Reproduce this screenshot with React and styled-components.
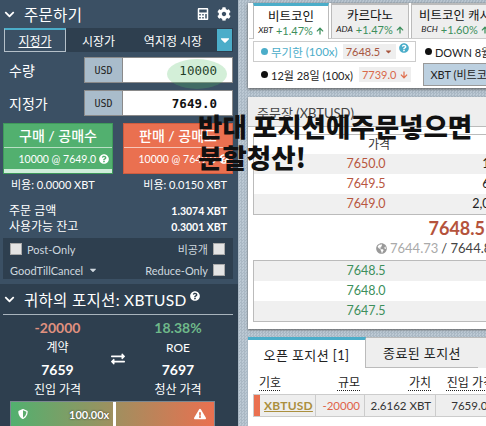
import React from 'react';
import styled, { createGlobalStyle } from 'styled-components';
import {
  FaCalculator,
  FaCog,
  FaChevronDown,
  FaQuestionCircle,
  FaArrowUp,
  FaArrowDown,
  FaCaretDown,
  FaGlobeAmericas,
  FaExchangeAlt,
  FaShieldAlt,
  FaExclamationTriangle,
} from 'react-icons/fa';

const FONT = '"Lato", "Noto Sans CJK KR", sans-serif';

const GlobalStyle = createGlobalStyle`
  html, body {
    margin: 0;
    padding: 0;
    overflow: hidden;
  }
  * {
    box-sizing: border-box;
  }
`;

const OrderForm = () => (
  <>
    <SectionHeader>
      <FaChevronDown size={11} />
      <SectionTitle>주문하기</SectionTitle>
      <HeaderIcons>
        <FaCalculator size={12} />
        <FaCog size={14} />
      </HeaderIcons>
    </SectionHeader>
    <OrderTabs>
      <OrderTab $active $width={62}>지정가</OrderTab>
      <OrderTab $width={65}>시장가</OrderTab>
      <OrderTab $width={84}>역지정 시장</OrderTab>
      <TabCaret>
        <FaCaretDown size={14} />
      </TabCaret>
    </OrderTabs>
    <FieldRow>
      <FieldLabel>수량</FieldLabel>
      <Field>
        <FieldUnit>USD</FieldUnit>
        <FieldValue $light>
          10000
          <Highlight />
        </FieldValue>
      </Field>
    </FieldRow>
    <FieldRow>
      <FieldLabel>지정가</FieldLabel>
      <Field>
        <FieldUnit>USD</FieldUnit>
        <FieldValue>7649.0</FieldValue>
      </Field>
    </FieldRow>
    <TradeButtons>
      <TradeButton $color="#52b06f" $border="#3f9a5b">
        <TradeTitle>구매 / 공매수</TradeTitle>
        <TradeDetail>
          10000 @ 7649.0 <FaQuestionCircle size={10} />
        </TradeDetail>
        <TradeFoot />
      </TradeButton>
      <TradeButton $color="#ea7050" $border="#cf5c3f">
        <TradeTitle>판매 / 공매도</TradeTitle>
        <TradeDetail>
          10000 @ 7649.0 <FaQuestionCircle size={10} />
        </TradeDetail>
      </TradeButton>
    </TradeButtons>
    <FeeRow>
      <span>비용: 0.0000 XBT</span>
      <span>비용: 0.0150 XBT</span>
    </FeeRow>
    <Summary>
      <SummaryRow>
        <span>주문 금액</span>
        <strong>1.3074 XBT</strong>
      </SummaryRow>
      <SummaryRow>
        <span>사용가능 잔고</span>
        <strong>0.3001 XBT</strong>
      </SummaryRow>
    </Summary>
    <Options>
      <OptionRow>
        <OptionItem>
          <Check />
          Post-Only
        </OptionItem>
        <OptionItem>
          비공개
          <Check />
        </OptionItem>
      </OptionRow>
      <OptionRow>
        <OptionItem>
          GoodTillCancel <FaCaretDown size={10} />
        </OptionItem>
        <OptionItem>
          Reduce-Only
          <Check />
        </OptionItem>
      </OptionRow>
    </Options>
  </>
);

const PositionSummary = () => (
  <PositionSection>
    <PositionHeader>
      <FaChevronDown size={11} />
      <SectionTitle>귀하의 포지션: XBTUSD</SectionTitle>
      <TitleHelp>
        <FaQuestionCircle size={10} />
      </TitleHelp>
    </PositionHeader>
    <Stats>
      <StatColumn>
        <StatValue $color="#e0917f">-20000</StatValue>
        <StatLabel>계약</StatLabel>
        <StatValue>7659</StatValue>
        <StatLabel>진입 가격</StatLabel>
      </StatColumn>
      <SwapIcon>
        <FaExchangeAlt size={14} />
      </SwapIcon>
      <StatColumn>
        <StatValue $color="#6fb98a">18.38%</StatValue>
        <StatLabel>ROE</StatLabel>
        <StatValue>7697</StatValue>
        <StatLabel>청산 가격</StatLabel>
      </StatColumn>
    </Stats>
    <LeverageBar>
      <FaShieldAlt size={10} />
      <LeverageText>100.00x</LeverageText>
      <LeverageMark />
      <FaExclamationTriangle size={12} />
    </LeverageBar>
  </PositionSection>
);

const InstrumentPanel = () => (
  <TopPanel>
    <CoinTabs>
      <CoinTab $active $width={76}>
        <CoinName>비트코인</CoinName>
        <CoinChange>
          <i>XBT</i> <b>+1.47%</b> <FaArrowUp size={8} />
        </CoinChange>
      </CoinTab>
      <CoinTab $width={78}>
        <CoinName>카르다노</CoinName>
        <CoinChange>
          <i>ADA</i> <b>+1.47%</b> <FaArrowUp size={8} />
        </CoinChange>
      </CoinTab>
      <CoinTab $width={88}>
        <CoinName>비트코인 캐시</CoinName>
        <CoinChange>
          <i>BCH</i> <b>+1.60%</b> <FaArrowUp size={8} />
        </CoinChange>
      </CoinTab>
    </CoinTabs>
    <ContractRow>
      <ContractBox>
        <Dot $color="#4badc9" />
        <ContractName>무기한</ContractName>
        <ContractLev>(100x)</ContractLev>
        <PriceTag>
          7648.5 <FaCaretDown size={9} color="#a8563f" />
        </PriceTag>
        <BoxHelp>
          <FaQuestionCircle size={10} />
        </BoxHelp>
      </ContractBox>
      <ContractText $gap={9}>
        <Dot />
        DOWN 8월 28일
      </ContractText>
    </ContractRow>
    <ContractRow $tall>
      <ContractText $inset>
        <Dot />
        12월 28일 (100x)
        <PriceTag $red>
          7739.0 <FaArrowDown size={8} color="#e0704f" />
        </PriceTag>
      </ContractText>
      <CoinSelect>XBT (비트코인)</CoinSelect>
    </ContractRow>
  </TopPanel>
);

const asks = [
  ['7650.0', '100'],
  ['7649.5', '600'],
  ['7649.0', '2,000'],
];
const bids = ['7648.5', '7648.0', '7647.5'];

const OrderBook = () => (
  <BookPanel>
    <BookHeader>주문장 (XBTUSD)</BookHeader>
    <BookBody>
      <BookTable $shade="even">
        <BookHead>가격</BookHead>
        {asks.map(([price, size]) => (
          <BookRow key={price} $color="#b8563f">
            <BookPrice>{price}</BookPrice>
            <BookSize>{size}</BookSize>
          </BookRow>
        ))}
      </BookTable>
      <MidPrice>7648.5</MidPrice>
      <IndexLine>
        <FaGlobeAmericas size={11} color="#999" /> <span>7644.73</span> / 7644.8
      </IndexLine>
      <BookTable $shade="odd">
        {bids.map((price) => (
          <BookRow key={price} $color="#3d8f5c">
            <BookPrice>{price}</BookPrice>
          </BookRow>
        ))}
      </BookTable>
    </BookBody>
  </BookPanel>
);

const Positions = () => (
  <PositionsPanel>
    <PositionTabs>
      <PositionTab $active $width={118}>오픈 포지션 [1]</PositionTab>
      <PositionTab $width={112}>종료된 포지션</PositionTab>
    </PositionTabs>
    <PositionGrid>
      <ColHead $align="left">
        <u>기호</u>
      </ColHead>
      <ColHead>
        <u>규모</u>
      </ColHead>
      <ColHead>
        <u>가치</u>
      </ColHead>
      <ColHead>
        <u>진입 가격</u>
      </ColHead>
      <SymbolCell>
        <SideMark />
        <SymbolLink>XBTUSD</SymbolLink>
      </SymbolCell>
      <DataCell $color="#e0634a">-20000</DataCell>
      <DataCell>2.6162 XBT</DataCell>
      <DataCell>7659.00</DataCell>
    </PositionGrid>
  </PositionsPanel>
);

const App = () => (
  <>
    <GlobalStyle />
    <Page>
      <Sidebar>
        <OrderSection>
          <OrderForm />
        </OrderSection>
        <PositionSummary />
      </Sidebar>
      <Main>
        <InstrumentPanel />
        <OrderBook />
        <Positions />
      </Main>
      <Notice>
        반대 포지션에주문넣으면
        <br />
        분할청산!
      </Notice>
    </Page>
  </>
);

export default App;

const Page = styled.div`
  position: relative;
  display: flex;
  width: 486px;
  height: 426px;
  overflow: hidden;
  font-family: ${FONT};
  font-size: 12px;
  background-color: #bcc9d4;
  background-image: conic-gradient(#aab8c4 25%, transparent 0 50%, #aab8c4 0 75%, transparent 0);
  background-size: 3px 3px;
`;

const Sidebar = styled.aside`
  flex: 0 0 238px;
  min-width: 0;
  display: flex;
  flex-direction: column;
  color: #fff;
`;

const OrderSection = styled.section`
  flex: 0 0 284px;
  padding: 0 5px 0 3px;
  background: #3b5064;
`;

const SectionHeader = styled.header`
  display: flex;
  align-items: center;
  height: 28px;
  padding-left: 1px;
`;

const SectionTitle = styled.h2`
  margin: 0 0 0 9px;
  font-size: 15.5px;
  font-weight: 400;
  letter-spacing: 0.3px;
`;

const HeaderIcons = styled.div`
  display: flex;
  align-items: center;
  gap: 8px;
  margin-left: auto;
  padding-right: 2px;
`;

const OrderTabs = styled.nav`
  display: flex;
  align-items: stretch;
  height: 24px;
  margin-left: 1px;
  background: #2e3f4f;
`;

const OrderTab = styled.div`
  flex: 0 0 ${(p) => p.$width}px;
  display: flex;
  align-items: center;
  justify-content: center;
  font-size: 12px;
  color: #fff;
  text-decoration: ${(p) => (p.$active ? 'underline' : 'none')};
  background: ${(p) => (p.$active ? '#3b5064' : 'transparent')};
  border: ${(p) => (p.$active ? '1px solid #b5c0c9' : 'none')};
  border-top: ${(p) => (p.$active ? '2px solid #4badc9' : 'none')};
`;

const TabCaret = styled.div`
  width: 15px;
  margin: 1px 1px 1px auto;
  display: flex;
  align-items: center;
  justify-content: center;
  background: #4badc9;
`;

const FieldRow = styled.div`
  display: flex;
  align-items: center;
  justify-content: space-between;
  height: 26px;
  margin: 5px 0 7px;
  padding-left: 6px;
`;

const FieldLabel = styled.label`
  font-size: 14px;
`;

const Field = styled.div`
  display: flex;
  width: 149px;
  height: 26px;
  border: 1px solid #8a8a8a;
  background: #fff;
`;

const FieldUnit = styled.div`
  flex: 0 0 38px;
  display: flex;
  align-items: center;
  justify-content: center;
  font-family: "DejaVu Sans Mono", monospace;
  font-size: 10px;
  color: #222;
  background: #a9bccb;
  border-right: 1px solid #8a8a8a;
`;

const FieldValue = styled.div`
  position: relative;
  flex: 1;
  display: flex;
  align-items: center;
  justify-content: flex-end;
  padding-right: 15px;
  font-family: "DejaVu Sans Mono", monospace;
  font-size: 12.5px;
  font-weight: ${(p) => (p.$light ? 400 : 700)};
  color: #111;
`;

const Highlight = styled.span`
  position: absolute;
  right: 5px;
  top: 1px;
  width: 60px;
  height: 30px;
  border-radius: 50%;
  background: rgba(80, 190, 100, 0.25);
`;

const TradeButtons = styled.div`
  display: flex;
  justify-content: space-between;
`;

const TradeButton = styled.div`
  width: 110px;
  height: 51px;
  border: 1px solid ${(p) => p.$border};
  background: ${(p) => p.$color};
  text-align: center;
`;

const TradeTitle = styled.div`
  height: 24px;
  line-height: 24px;
  font-size: 14px;
  font-weight: 500;
  border-bottom: 1px solid rgba(255, 255, 255, 0.6);
`;

const TradeDetail = styled.div`
  display: flex;
  align-items: center;
  justify-content: flex-end;
  gap: 3px;
  height: 21px;
  padding-right: 3px;
  font-size: 10.5px;
`;

const TradeFoot = styled.div`
  height: 4px;
  background: #cfeeda;
`;

const FeeRow = styled.div`
  display: flex;
  justify-content: space-between;
  padding: 3px 6px 0 8px;
  font-size: 11px;
  line-height: 16px;
`;

const Summary = styled.div`
  padding: 10px 6px 0 6px;
`;

const SummaryRow = styled.div`
  display: flex;
  justify-content: space-between;
  font-size: 12px;
  line-height: 16px;

  strong {
    font-size: 10.5px;
    font-weight: 700;
  }
`;

const Options = styled.div`
  display: flex;
  flex-direction: column;
  gap: 3px;
  height: 41px;
  margin-top: 3px;
  padding: 2px 8px 0 7px;
  background: #2e3f4f;
`;

const OptionRow = styled.div`
  display: flex;
  justify-content: space-between;
  align-items: center;
  height: 18px;
`;

const OptionItem = styled.div`
  display: flex;
  align-items: center;
  gap: 5px;
  font-size: 11px;
  color: #cfd8df;
`;

const Check = styled.span`
  display: block;
  width: 12px;
  height: 12px;
  background: #e4e4e4;
  border: 1px solid #aaa;
`;

const PositionSection = styled.section`
  flex: 1;
  min-height: 0;
  overflow: hidden;
  padding: 0 5px 0 3px;
  background: #2e3f4f;
`;

const PositionHeader = styled(SectionHeader)`
  height: 31px;
  border-bottom: 1px solid #a9b4bd;
`;

const TitleHelp = styled.span`
  margin: -6px 0 0 4px;
  line-height: 10px;
`;

const Stats = styled.div`
  display: grid;
  grid-template-columns: 107px 14px 106px;
  padding: 3px 0 0 1px;
`;

const StatColumn = styled.div`
  display: flex;
  flex-direction: column;
  align-items: center;
`;

const StatValue = styled.div`
  height: 20px;
  line-height: 20px;
  font-size: 14px;
  font-weight: 700;
  color: ${(p) => p.$color || '#fff'};
`;

const StatLabel = styled.div`
  height: 20px;
  margin-bottom: 2px;
  line-height: 20px;
  font-size: 12px;
`;

const SwapIcon = styled.div`
  display: flex;
  align-items: center;
  justify-content: center;
  padding-bottom: 2px;
`;

const LeverageBar = styled.div`
  display: flex;
  align-items: center;
  width: 205px;
  height: 30px;
  margin: -1px 0 0 7px;
  padding: 0 8px 4px 7px;
  border: 1px solid #7b8791;
  background: linear-gradient(to right, #52b06f, #ea7050);
`;

const LeverageText = styled.span`
  margin-left: 41px;
  font-size: 11px;
  font-weight: 700;
  text-shadow: 0 0 2px #222;
`;

const LeverageMark = styled.span`
  width: 3px;
  margin: 0 auto -4px 4px;
  background: #fff;
  align-self: stretch;
`;

const Main = styled.main`
  flex: 1;
  min-width: 0;
  display: flex;
  flex-direction: column;
  padding: 3px 0 0 10px;
  overflow: hidden;
`;

const TopPanel = styled.section`
  flex: 0 0 85px;
  width: 280px;
  padding: 0 0 0 1px;
  background: #fff;
  box-shadow: 0 1px 3px #555;
`;

const CoinTabs = styled.div`
  display: flex;
  gap: 2px;
  height: 36px;
  padding-left: 4px;
  border-bottom: 1px solid #ccc;
`;

const CoinTab = styled.div`
  flex: 0 0 ${(p) => p.$width}px;
  height: ${(p) => (p.$active ? '36px' : '35px')};
  padding-top: 2px;
  overflow: hidden;
  white-space: nowrap;
  text-align: center;
  background: ${(p) => (p.$active ? '#fff' : '#eee')};
  border: 1px solid #bbb;
  border-top: ${(p) => (p.$active ? '3px solid #4badc9' : '2px solid #bbb')};
  border-bottom: none;
`;

const CoinName = styled.div`
  font-size: 12.5px;
  line-height: 17px;
  color: #111;
`;

const CoinChange = styled.div`
  display: flex;
  align-items: center;
  justify-content: center;
  gap: 3px;
  font-size: 11px;
  line-height: 11px;
  color: #3d8f5c;

  i {
    font-size: 8.5px;
    color: #222;
  }
  b {
    font-weight: 400;
  }
`;

const ContractRow = styled.div`
  display: flex;
  align-items: center;
  padding-left: 4px;
  margin-top: ${(p) => (p.$tall ? '1px' : '2px')};
  height: ${(p) => (p.$tall ? '23px' : '21px')};
`;

const ContractBox = styled.div`
  display: flex;
  align-items: center;
  flex: none;
  width: 163px;
  height: 21px;
  padding-left: 7px;
  border: 1px solid #ccc;
  font-size: 11.5px;
`;

const Dot = styled.span`
  flex: none;
  width: 7px;
  height: 7px;
  margin-right: 3px;
  border-radius: 50%;
  background: ${(p) => p.$color || '#111'};
`;

const ContractName = styled.span`
  color: #4badc9;
`;

const ContractLev = styled.span`
  margin: 0 5px 0 3px;
  color: #4badc9;
`;

const PriceTag = styled.span`
  display: inline-flex;
  align-items: center;
  gap: 4px;
  height: 15px;
  margin-left: ${(p) => (p.$red ? '6px' : 0)};
  padding: 0 3px;
  font-size: 11px;
  color: ${(p) => (p.$red ? '#d9694b' : '#a8563f')};
  background: #eee;
`;

const BoxHelp = styled.span`
  margin: -7px 0 0 3px;
  color: #4badc9;
  line-height: 10px;
`;

const ContractText = styled.div`
  display: flex;
  align-items: center;
  flex: none;
  font-size: 11px;
  white-space: nowrap;
  color: #222;
  margin-left: ${(p) => p.$gap || 0}px;
  padding-left: ${(p) => (p.$inset ? '8px' : 0)};
`;

const CoinSelect = styled.div`
  flex: none;
  width: 110px;
  height: 23px;
  padding-left: 6px;
  margin-left: 12px;
  line-height: 21px;
  font-size: 11px;
  white-space: nowrap;
  color: #222;
  background: #bcd0e0;
  border: 1px solid #999;
`;

const BookPanel = styled.section`
  flex: 0 0 232px;
  width: 280px;
  margin-top: 9px;
  background: #fff;
  box-shadow: 0 1px 2px #666;
`;

const BookHeader = styled.header`
  height: 30px;
  padding: 8px 0 0 9px;
  font-size: 13px;
  line-height: 16px;
  color: #444;
  background: #eee;
  border-bottom: 1px solid #bbb;
`;

const BookBody = styled.div`
  padding: 7px 0 0 5px;
`;

const BookTable = styled.div`
  width: 290px;
  border: 1px solid #bbb;

  & > :nth-child(${(p) => p.$shade}) {
    background: #f0f0f0;
  }
`;

const BookHead = styled.div`
  width: 250px;
  height: 19px;
  line-height: 19px;
  text-align: center;
  font-size: 12px;
  color: #333;
`;

const BookRow = styled.div`
  display: flex;
  height: 20px;
  line-height: 20px;
  font-size: 12.5px;
  color: ${(p) => p.$color};
`;

const BookPrice = styled.span`
  flex: 0 0 224px;
  text-align: center;
`;

const BookSize = styled.span`
  flex: 0 0 40px;
  margin-left: -14px;
  text-align: right;
  color: #222;
`;

const MidPrice = styled.div`
  width: 290px;
  height: 24px;
  padding-right: 58px;
  line-height: 26px;
  text-align: right;
  font-size: 18px;
  font-weight: 700;
  color: #b5533c;
`;

const IndexLine = styled.div`
  display: flex;
  align-items: center;
  gap: 3px;
  height: 21px;
  padding: 0 0 3px 123px;
  white-space: nowrap;
  font-size: 13px;
  color: #444;

  span {
    color: #aaa;
  }
`;

const PositionsPanel = styled.section`
  flex: 1;
  width: 280px;
  margin-top: 8px;
  background: #fff;
`;

const PositionTabs = styled.div`
  display: flex;
  height: 31px;
  background: #eee;
  border-top: 1px solid #bbb;
`;

const PositionTab = styled.div`
  flex: 0 0 ${(p) => p.$width}px;
  display: flex;
  align-items: center;
  justify-content: center;
  font-size: 13px;
  letter-spacing: 0.4px;
  color: #222;
  background: ${(p) => (p.$active ? '#fff' : '#eee')};
  border-top: ${(p) => (p.$active ? '3px solid #4badc9' : 'none')};
  border-right: ${(p) => (p.$active ? '1px solid #bbb' : 'none')};
  border-bottom: ${(p) => (p.$active ? 'none' : '1px solid #bbb')};
  margin-top: ${(p) => (p.$active ? '-1px' : 0)};
`;

const PositionGrid = styled.div`
  display: grid;
  grid-template-columns: 63px 49px 71px 63px;
  grid-template-rows: 26px 23px;
  padding-left: 5px;
`;

const ColHead = styled.div`
  display: flex;
  align-items: center;
  justify-content: ${(p) => (p.$align === 'left' ? 'flex-start' : 'flex-end')};
  padding: 0 5px 0 6px;
  font-size: 12px;
  white-space: nowrap;
  color: #222;

  u {
    text-decoration: underline dotted;
    text-underline-offset: 3px;
  }
`;

const SymbolCell = styled.div`
  display: flex;
  align-items: center;
  background: #eee;
  border: 1px solid #ccc;
`;

const SideMark = styled.span`
  align-self: stretch;
  width: 6px;
  margin-right: 4px;
  background: #ea7050;
`;

const SymbolLink = styled.span`
  font-size: 12px;
  font-weight: 700;
  letter-spacing: 0.2px;
  color: #ab8f3e;
  text-decoration: underline;
`;

const DataCell = styled.div`
  display: flex;
  align-items: center;
  justify-content: flex-end;
  padding-right: 4px;
  font-size: 11.5px;
  white-space: nowrap;
  color: ${(p) => p.$color || '#333'};
  background: #eee;
  border: 1px solid #ccc;
  border-left: none;
`;

const Notice = styled.div`
  position: absolute;
  left: 198px;
  top: 110px;
  font-family: "Noto Sans CJK KR", sans-serif;
  font-size: 26.5px;
  font-weight: 900;
  line-height: 31px;
  white-space: nowrap;
  color: #111;
`;
